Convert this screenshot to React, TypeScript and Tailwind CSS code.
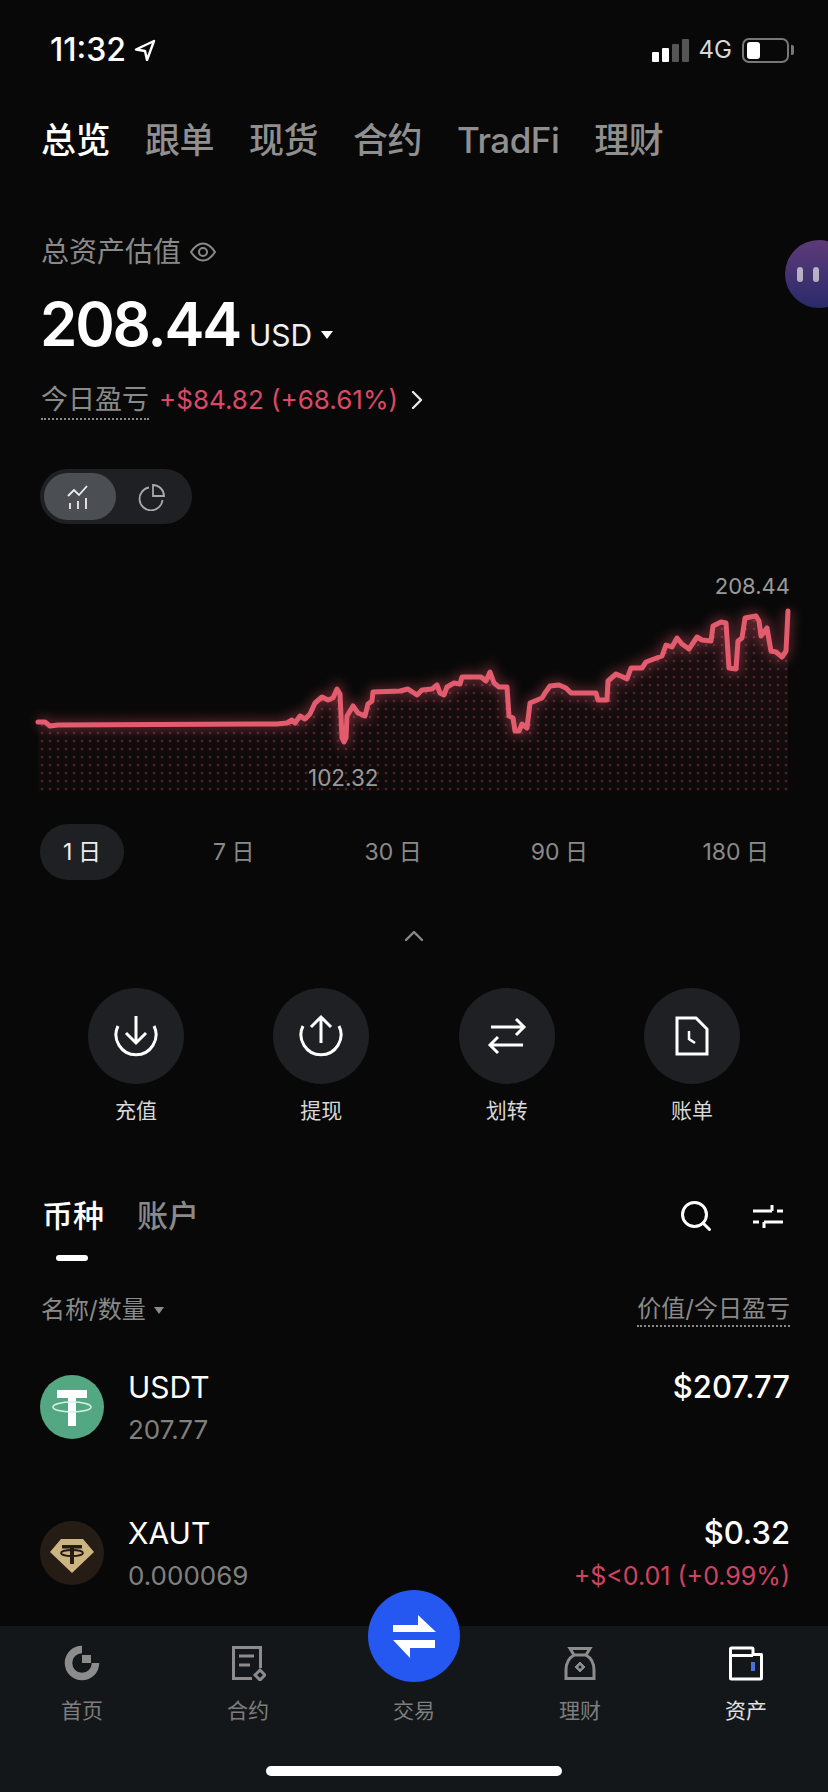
import { ChevronRight, ChevronUp, Search } from "lucide-react";

const TOP_TABS = ["总览", "跟单", "现货", "合约", "TradFi", "理财"];

const RANGES = [
  { label: "1 日", active: true },
  { label: "7 日" },
  { label: "30 日" },
  { label: "90 日" },
  { label: "180 日" },
];

// traced from the picture, in page pixels
const LINE =
  "38,721 45,721 50,725 58,724 277,723 287,722 292,719 295,722 300,715 305,718 310,713 315,702 322,696 328,699 333,697 337,688 340,693 342,737 344,741 346,737 347,715 353,705 358,712 365,715 368,703 372,700 373,691 400,690 408,688 414,692 417,694 422,689 432,688 437,684 440,692 444,694 447,686 454,682 460,683 462,676 481,676 486,680 490,671 494,682 499,686 507,686 509,715 513,717 515,730 519,730 522,723 527,727 530,702 542,697 545,692 550,685 559,684 566,687 571,692 596,692 598,699 607,699 608,680 616,673 623,676 627,678 631,667 642,667 646,661 662,655 666,644 672,646 677,637 682,643 689,648 697,636 702,639 711,640 713,625 721,621 726,622 729,667 736,668 738,640 742,637 745,617 756,615 759,620 761,635 767,627 771,650 776,651 782,656 786,650 788,610";

function Chart() {
  return (
    <div className="relative mt-[37px] h-[254px]">
      <svg viewBox="0 560 828 254" className="block h-[254px] w-[828px]">
        <defs>
          <pattern id="dots" x="40" y="730" width="8" height="8" patternUnits="userSpaceOnUse">
            <circle cx="2" cy="2" r="1.3" fill="#e4596b" />
          </pattern>
          <linearGradient id="tint" x1="0" y1="0" x2="0" y2="1">
            <stop offset="0" stopColor="#e4596b" stopOpacity="0.1" />
            <stop offset="1" stopColor="#e4596b" stopOpacity="0.02" />
          </linearGradient>
          <filter id="glow" x="-10%" y="-30%" width="120%" height="160%">
            <feGaussianBlur stdDeviation="6" />
          </filter>
        </defs>
        <polygon points={`${LINE} 788,790 38,790`} fill="url(#tint)" />
        <polygon points={`${LINE} 788,790 38,790`} fill="url(#dots)" opacity="0.32" />
        <polyline points={LINE} fill="none" stroke="#e4596b" strokeWidth="9" opacity="0.4" filter="url(#glow)" />
        <polyline points={LINE} fill="none" stroke="#e35c6e" strokeWidth="5" strokeLinejoin="round" strokeLinecap="round" />
      </svg>
      <span className="absolute right-[38px] top-[11px] text-[22px] leading-[28px] text-[#9a9a9a]">208.44</span>
      <span className="absolute left-[308px] top-[203px] text-[22.5px] leading-[28px] text-[#9a9a9a]">102.32</span>
    </div>
  );
}

function ActionIcon({ name }: { name: string }) {
  return (
    <svg viewBox="0 0 44 44" className="h-[44px] w-[44px]" fill="none" stroke="#fff" strokeWidth="3">
      {name === "in" && (
        <>
          <path d="M4 12A20 20 0 1 0 40 12" />
          <path d="M22 2v27M12 19l10 10 10-10" />
        </>
      )}
      {name === "out" && (
        <>
          <path d="M4 12A20 20 0 1 0 40 12" />
          <path d="M22 29V3M12 13L22 3l10 10" />
        </>
      )}
      {name === "swap" && (
        <>
          <path d="M6 13h33M31 5l8 8-8 8" />
          <path d="M38 31H5M13 23l-8 8 8 8" />
        </>
      )}
      {name === "bill" && (
        <>
          <path d="M7 4h19l11 11v25H7z" />
          <path d="M19 17v8l6 4" strokeWidth="2.500" />
        </>
      )}
    </svg>
  );
}

function Action({ name, label }: { name: string; label: string }) {
  return (
    <div className="flex w-[96px] flex-col items-center">
      <div className="flex h-[96px] w-[96px] items-center justify-center rounded-full bg-[#1e2023]">
        <ActionIcon name={name} />
      </div>
      <span className="mt-[12px] text-[21px] leading-[30px] text-[#d8d8d8]">{label}</span>
    </div>
  );
}

function CoinRow({
  icon,
  name,
  amount,
  value,
  change,
}: {
  icon: React.ReactNode;
  name: string;
  amount: string;
  value: string;
  change?: string;
}) {
  return (
    <div className="flex h-[146px] items-start pl-[40px] pr-[38px]">
      <div className="mt-[8px] h-[64px] w-[64px] shrink-0">{icon}</div>
      <div className="ml-[24px] flex flex-col">
        <span className="text-[30px] leading-[40px] text-white">{name}</span>
        <span className="mt-[3px] text-[26px] leading-[40px] text-[#808080]">{amount}</span>
      </div>
      <div className="ml-auto flex flex-col items-end">
        <span className="text-[31px] font-medium leading-[40px] text-white">{value}</span>
        {change && <span className="mt-[3px] text-[25px] leading-[40px] text-[#cf4360]">{change}</span>}
      </div>
    </div>
  );
}

function TetherIcon() {
  return (
    <svg viewBox="0 0 64 64" className="h-[64px] w-[64px]">
      <circle cx="32" cy="32" r="32" fill="#53a883" />
      <path d="M17 15h30v8H36v7.500h-8V23H17z" fill="#fff" />
      <path d="M28 30h8v21h-8z" fill="#fff" />
      <ellipse cx="32" cy="32" rx="19" ry="5" fill="none" stroke="#d9f0e6" strokeWidth="1.500" />
    </svg>
  );
}

function GoldIcon() {
  return (
    <svg viewBox="0 0 64 64" className="h-[64px] w-[64px]">
      <circle cx="32" cy="32" r="32" fill="#241c15" />
      <path d="M21 18h22l11 13-22 21-22-21z" fill="#cdb583" />
      <path d="M22 24h20v3.500H34V31h-4v-3.500h-8zM30 31h4v12h-4z" fill="#241c15" />
      <ellipse cx="32" cy="32" rx="11" ry="3" fill="none" stroke="#241c15" strokeWidth="1.800" />
    </svg>
  );
}

function NavIcon({ name }: { name: string }) {
  if (name === "home") {
    return (
      <svg viewBox="0 0 36 36" className="h-[36px] w-[36px]" fill="none">
        <path d="M18 4.500A13.500 13.500 0 1 0 31.500 18" stroke="#8c8c8c" strokeWidth="7.500" />
        <path d="M18 10h9v8h-9z" fill="#8c8c8c" />
      </svg>
    );
  }
  if (name === "futures") {
    return (
      <svg viewBox="0 0 36 36" className="h-[36px] w-[36px]" fill="none" stroke="#8c8c8c" strokeWidth="3">
        <path d="M30.500 23V2.500h-27v31H22" />
        <path d="M9 11h15M9 20h11" />
        <path d="M30 25l5 5-5 5-5-5z" strokeWidth="3" />
      </svg>
    );
  }
  if (name === "earn") {
    return (
      <svg viewBox="0 0 36 36" className="h-[36px] w-[36px]" fill="none" stroke="#8c8c8c" strokeWidth="3">
        <path d="M8 3.500h20l-4 6.500H12z" />
        <path d="M12 10C7 13 4 19 4 25v8.500h28V25c0-6-3-12-8-15" />
        <path d="M18 17l5 5-5 5-5-5z" fill="#8c8c8c" strokeWidth="1" />
        <circle cx="18" cy="22" r="1.500" fill="#14171a" stroke="none" />
      </svg>
    );
  }
  return (
    <svg viewBox="0 0 36 36" className="h-[36px] w-[36px]" fill="none">
      <path d="M2.500 10V4q0-1 1-1H24q1 0 1 1v5.500h8.500V33q0 1-1 1h-29q-1 0-1-1z" stroke="#fff" strokeWidth="3" strokeLinejoin="round" />
      <path d="M2.500 10.500H25" stroke="#fff" strokeWidth="3" />
      <path d="M23 17h4v9h-4z" fill="#4b6fe0" />
    </svg>
  );
}

function NavItem({ name, label, active }: { name?: string; label: string; active?: boolean }) {
  return (
    <div className="flex w-[120px] flex-col items-center">
      <div className="flex h-[36px] items-center justify-center">{name && <NavIcon name={name} />}</div>
      <span className={`mt-[15px] text-[21px] leading-[30px] ${active ? "text-[#e4e4e4]" : "text-[#7d7d7d]"}`}>{label}</span>
    </div>
  );
}

export default function App() {
  return (
    <div className="relative flex h-[1792px] w-[828px] flex-col overflow-hidden bg-[#080808] font-['Inter','Noto_Sans_CJK_SC',sans-serif] text-white">
      {/* status bar */}
      <div className="flex h-[100px] items-center pl-[50px] pr-[34px]">
        <span className="text-[32px] font-medium leading-none">11:32</span>
        <svg viewBox="0 0 22 22" className="ml-[8px] h-[22px] w-[22px]" fill="none" stroke="#fff" strokeWidth="2.400">
          <path d="M20 2L2 10.500l9 1.500 2 9z" strokeLinejoin="round" />
        </svg>
        <div className="ml-auto flex items-end gap-[3px]">
          <span className="h-[10px] w-[7px] rounded-[1px] bg-white" />
          <span className="h-[14px] w-[7px] rounded-[1px] bg-white" />
          <span className="h-[18px] w-[7px] rounded-[1px] bg-[#555]" />
          <span className="h-[23px] w-[7px] rounded-[1px] bg-[#555]" />
        </div>
        <span className="ml-[10px] text-[24px] leading-none text-[#d8d8d8]">4G</span>
        <div className="ml-[10px] flex h-[25px] w-[47px] items-center rounded-[7px] border-2 border-[#777] pl-[3px]">
          <span className="h-[17px] w-[13px] rounded-[3px] bg-white" />
        </div>
        <span className="ml-[2px] h-[10px] w-[3px] rounded-r-[2px] bg-[#777]" />
      </div>

      {/* top tabs */}
      <div className="mt-[20px] flex h-[40px] items-center gap-[35px] pl-[41px]">
        {TOP_TABS.map((tab, i) => (
          <span key={tab} className={`text-[35px] font-medium leading-[40px] tracking-[-0.5px] ${i === 0 ? "text-white" : "text-[#8f8f8f]"}`}>
            {tab}
          </span>
        ))}
      </div>

      {/* total */}
      <div className="mt-[72px] flex h-[40px] items-center pl-[41px]">
        <span className="text-[28px] leading-[40px] text-[#8a8a8a]">总资产估值</span>
        <svg viewBox="0 0 26 26" className="ml-[9px] h-[26px] w-[26px]" fill="none" stroke="#8a8a8a" strokeWidth="2">
          <path d="M1 13C5 7 9 4.500 13 4.500S21 7 25 13c-4 6-8 8.500-12 8.500S5 19 1 13z" />
          <circle cx="13" cy="13" r="4" />
        </svg>
      </div>
      <div className="mt-[17px] flex h-[70px] items-baseline pl-[40px]">
        <span className="text-[60px] font-semibold leading-[70px] tracking-[-2.200px]">208.44</span>
        <span className="ml-[9px] text-[30px] leading-[70px] text-[#f0f0f0]">USD</span>
        <span className="ml-[9px] h-0 w-0 -translate-y-[7px] border-x-[6px] border-t-[8px] border-x-transparent border-t-white" />
      </div>
      <div className="mt-[22px] flex items-start pl-[41px]">
        <span className="border-b-2 border-dotted border-[#8a8a8a] text-[27px] leading-[37px] text-[#8a8a8a]">今日盈亏</span>
        <span className="ml-[10px] text-[26px] leading-[37px] text-[#dc4868]">+$84.82 (+68.61%)</span>
        <ChevronRight className="ml-[3px] mt-[3px] h-[32px] w-[32px] text-[#e8e8e8]" strokeWidth={1.8} />
      </div>

      {/* chart mode toggle */}
      <div className="ml-[40px] mt-[49px] flex h-[55px] w-[152px] items-center rounded-full bg-[#1e2023] pl-[4px]">
        <div className="flex h-[47px] w-[72px] items-center justify-center rounded-full bg-[#4b4e53]">
          <svg viewBox="0 0 26 26" className="h-[26px] w-[26px]" fill="none" stroke="#eee" strokeWidth="1.800">
            <path d="M1 12l6-6 5 5 8-9" />
            <path d="M3 19v6M11 17v8M19 14v11" />
          </svg>
        </div>
        <svg viewBox="0 0 28 28" className="ml-[22px] h-[28px] w-[28px]" fill="none" stroke="#a8a8a8" strokeWidth="1.800">
          <path d="M11 4.500A11.500 11.500 0 1 0 24.500 17" />
          <path d="M15 2v11h11C26 7 21 2 15 2z" />
        </svg>
      </div>

      <Chart />

      {/* ranges */}
      <div className="mt-[9px] flex h-[56px] items-center pl-[40px] pr-[59px] [word-spacing:-1px]">
        {RANGES.map((range, i) => (
          <span
            key={range.label}
            className={
              range.active
                ? "flex h-[56px] w-[84px] items-center justify-center rounded-full bg-[#1e2023] text-[23px] text-[#eee]"
                : `text-[23px] text-[#8a8a8a] ${i === 1 ? "ml-[89px]" : i === 2 ? "ml-[110px]" : i === 3 ? "ml-[109px]" : "ml-auto"}`
            }
          >
            {range.label}
          </span>
        ))}
      </div>

      <ChevronUp className="ml-[398px] mt-[40px] h-[32px] w-[32px] text-[#8a8a8a]" strokeWidth={1.8} />

      {/* actions */}
      <div className="mt-[36px] flex justify-between pl-[88px] pr-[88px]">
        <Action name="in" label="充值" />
        <Action name="out" label="提现" />
        <Action name="swap" label="划转" />
        <Action name="bill" label="账单" />
      </div>

      {/* coin list */}
      <div className="mt-[68px] flex h-[44px] items-center pl-[42px] pr-[44px]">
        <span className="text-[31px] font-medium leading-[44px]">币种</span>
        <span className="ml-[33px] text-[31px] font-medium leading-[44px] text-[#8a8a8a]">账户</span>
        <Search className="ml-auto h-[36px] w-[36px]" strokeWidth={2} />
        <svg viewBox="0 0 32 24" className="ml-[38px] h-[24px] w-[32px]" fill="none" stroke="#fff" strokeWidth="3">
          <path d="M1 7h19M25 7h6M20 1v6M1 18h6M12 18h19M12 18v6" />
        </svg>
      </div>
      <div className="ml-[56px] mt-[17px] h-[6px] w-[32px] rounded-full bg-white" />

      <div className="mt-[32px] flex h-[38px] items-start pl-[41px] pr-[38px]">
        <span className="text-[24px] leading-[34px] text-[#8a8a8a]">名称/数量</span>
        <span className="ml-[8px] mt-[14px] h-0 w-0 border-x-[5px] border-t-[7px] border-x-transparent border-t-[#8a8a8a]" />
        <span className="ml-auto border-b-2 border-dotted border-[#8a8a8a] text-[24px] leading-[32px] text-[#8a8a8a]">价值/今日盈亏</span>
      </div>

      <div className="mt-[36px]">
        <CoinRow icon={<TetherIcon />} name="USDT" amount="207.77" value="$207.77" />
        <CoinRow icon={<GoldIcon />} name="XAUT" amount="0.000069" value="$0.32" change="+$<0.01 (+0.99%)" />
      </div>

      {/* bottom nav */}
      <div className="absolute inset-x-0 bottom-0 h-[166px] bg-[#14171a]">
        <div className="flex justify-between px-[22px] pt-[19px]">
          <NavItem name="home" label="首页" />
          <NavItem name="futures" label="合约" />
          <NavItem label="交易" />
          <NavItem name="earn" label="理财" />
          <NavItem name="assets" label="资产" active />
        </div>
        <div className="mx-auto mt-[40px] h-[10px] w-[296px] rounded-full bg-white" />
        <div className="absolute left-[368px] top-[-36px] flex h-[92px] w-[92px] items-center justify-center rounded-full bg-[#2458f0]">
          <svg viewBox="0 0 44 44" className="h-[44px] w-[44px]" fill="#fff">
            <path d="M1 11h25V1l18 17H1z" />
            <path d="M43 26v8H18v10L1 26z" />
          </svg>
        </div>
      </div>

      {/* floating bubble */}
      <div className="absolute left-[785px] top-[240px] flex h-[68px] w-[68px] items-center gap-[10px] rounded-full bg-gradient-to-b from-[#5e3a78] to-[#2a2a6a] pl-[12px]">
        <span className="h-[15px] w-[6px] rounded-full bg-[#b8b0c4]" />
        <span className="h-[15px] w-[6px] rounded-full bg-[#b8b0c4]" />
      </div>
    </div>
  );
}
